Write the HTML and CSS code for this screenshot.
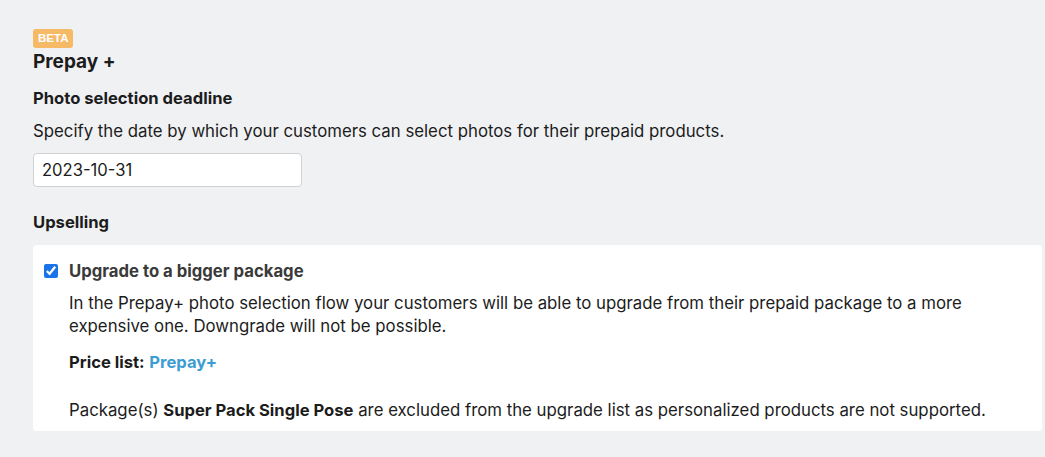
FILE: index.html
```html
<!DOCTYPE html>
<html lang="en">
<head>
<meta charset="utf-8">
<link rel="stylesheet" href="styles.css">
</head>
<body>
<main class="page">
  <span class="badge">BETA</span>
  <h1 class="title">Prepay +</h1>
  <h2 class="section-title">Photo selection deadline</h2>
  <p class="desc">Specify the date by which your customers can select photos for their prepaid products.</p>
  <input class="date-input" type="text" value="2023-10-31">
  <h2 class="section-title upsell-title">Upselling</h2>
  <section class="card">
    <label class="check-row">
      <input class="check" type="checkbox" checked>
      <span class="check-label">Upgrade to a bigger package</span>
    </label>
    <div class="card-body">
      <p class="card-text">In the Prepay+ photo selection flow your customers will be able to upgrade from their prepaid package to a more expensive one. Downgrade will not be possible.</p>
      <p class="price-list"><strong>Price list:</strong> <a class="link" href="#">Prepay+</a></p>
      <p class="note">Package(s) <strong>Super Pack Single Pose</strong> are excluded from the upgrade list as personalized products are not supported.</p>
    </div>
  </section>
</main>
</body>
</html>
```
FILE: styles.css
```css
html, body {
  margin: 0;
  padding: 0;
  background: #f0f1f3;
}
body {
  font-family: Inter, "Noto Sans", Arial, sans-serif;
  color: #1c1c1c;
  font-size: 16.8px;
}
strong {
  font-size: 16.6px;
}
.page {
  padding: 29px 3px 20px 33px;
  display: flex;
  flex-direction: column;
  align-items: flex-start;
}
.badge {
  display: inline-block;
  background: #f6b965;
  color: #fff;
  font-family: "Liberation Sans", Arial, sans-serif;
  font-weight: 700;
  font-size: 11.5px;
  line-height: 19px;
  height: 19px;
  padding: 0 5px;
  border-radius: 3px;
}
.title {
  margin: 1px 0 0;
  font-size: 19px;
  line-height: 26px;
  font-weight: 700;
}
.section-title {
  margin: 11px 0 0;
  font-size: 16.6px;
  line-height: 24px;
  font-weight: 700;
}
.desc {
  margin: 9px 0 0;
  line-height: 24px;
}
.date-input {
  margin-top: 10px;
  box-sizing: border-box;
  width: 269px;
  height: 34px;
  border: 1px solid #cfd1d4;
  border-radius: 4px;
  background: #fff;
  padding: 0 8px;
  font-family: Inter, "Noto Sans", Arial, sans-serif;
  font-size: 16.6px;
  color: #1c1c1c;
}
.upsell-title {
  margin-top: 23px;
}
.card {
  margin-top: 11px;
  align-self: stretch;
  background: #fff;
  border-radius: 4px;
  padding: 14px 11px 9px 11px;
}
.check-row {
  display: flex;
  align-items: center;
  gap: 11px;
  line-height: 24px;
}
.check {
  margin: 0;
  width: 14px;
  height: 14px;
  accent-color: #1a73e8;
}
.check-label {
  font-weight: 700;
  font-size: 16.7px;
  color: #3a3a3a;
}
.card-body {
  padding-left: 25px;
}
.card-text {
  margin: 9px 0 0;
  line-height: 23px;
}
.price-list {
  margin: 12px 0 0;
  line-height: 24px;
}
.link {
  color: #3c9dd2;
  font-weight: 700;
  font-size: 16.6px;
  text-decoration: none;
}
.note {
  margin: 24px 0 0;
  line-height: 24px;
}
```
